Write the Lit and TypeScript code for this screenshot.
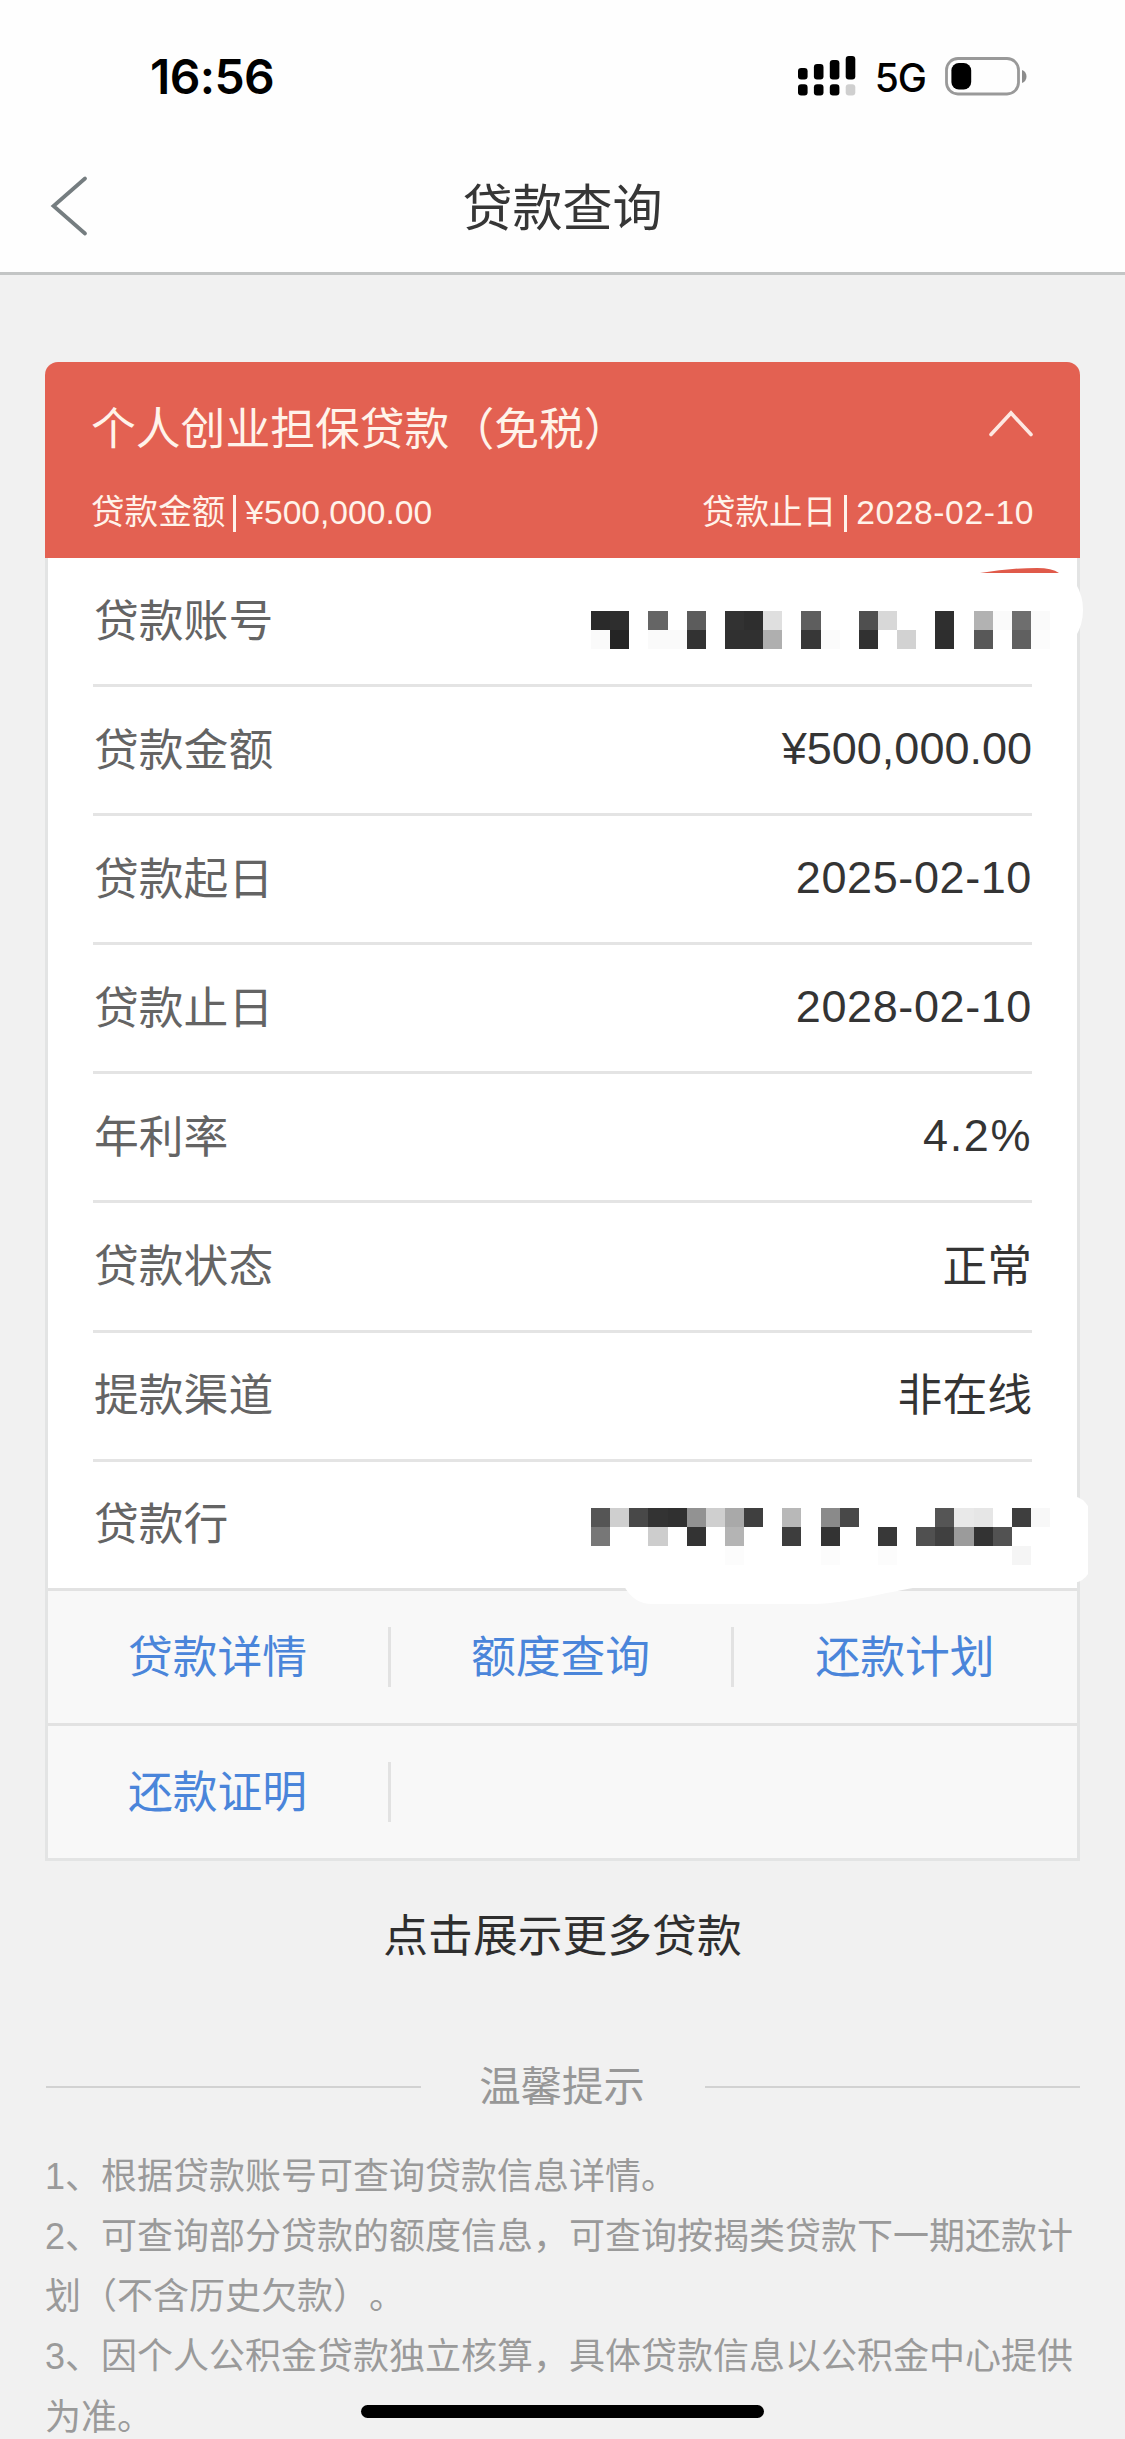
import { LitElement, html, css, svg } from "lit";
import { customElement, property } from "lit/decorators.js";

type Cell = [col: number, row: number, shade: string];

const ACCOUNT_MASK: Cell[] = [
  [0, 0, "#2a2a2a"], [1, 0, "#2e2e2e"], [3, 0, "#656565"], [5, 0, "#5c5c5c"], [7, 0, "#323232"],
  [8, 0, "#2e2e2e"], [9, 0, "#dfdfdf"], [11, 0, "#5e5e5e"], [14, 0, "#4f4f4f"], [15, 0, "#d8d8d8"],
  [18, 0, "#2f2f2f"], [20, 0, "#b2b2b2"], [21, 0, "#fafafa"], [22, 0, "#6e6e6e"], [23, 0, "#fafafa"],
  [0, 1, "#fafafa"], [1, 1, "#242424"], [3, 1, "#fafafa"], [4, 1, "#fafafa"], [5, 1, "#323232"],
  [7, 1, "#303030"], [8, 1, "#303030"], [9, 1, "#afafaf"], [11, 1, "#373737"], [12, 1, "#fbfbfb"],
  [14, 1, "#313131"], [16, 1, "#d2d2d2"], [18, 1, "#2e2e2e"], [20, 1, "#585858"], [22, 1, "#606060"],
  [23, 1, "#fcfcfc"],
];

const BANK_MASK: Cell[] = [
  [0, 0, "#555555"], [1, 0, "#cfcfcf"], [2, 0, "#484848"], [3, 0, "#333333"], [4, 0, "#303030"],
  [5, 0, "#929292"], [6, 0, "#cfcfcf"], [7, 0, "#a9a9a9"], [8, 0, "#3f3f3f"], [10, 0, "#b8b8b8"],
  [12, 0, "#8a8a8a"], [13, 0, "#484848"], [18, 0, "#555555"], [19, 0, "#e9e9e9"], [20, 0, "#e6e6e6"],
  [22, 0, "#3e3e3e"], [23, 0, "#f8f8f8"],
  [0, 1, "#777777"], [3, 1, "#cdcdcd"], [5, 1, "#333333"], [7, 1, "#b4b4b4"], [10, 1, "#3d3d3d"],
  [12, 1, "#333333"], [15, 1, "#383838"], [17, 1, "#505050"], [18, 1, "#404040"], [19, 1, "#9b9b9b"],
  [20, 1, "#333333"], [21, 1, "#525252"],
  [7, 2, "#fcfcfc"], [12, 2, "#fcfcfc"], [15, 2, "#fcfcfc"], [22, 2, "#f5f5f5"],
];

@customElement("pixel-mask")
class PixelMask extends LitElement {
  static styles = css`
    :host { display: block; }
    svg { display: block; }
  `;
  @property({ attribute: false }) cells: Cell[] = [];
  render() {
    return html`<svg width="459" height="57" viewBox="0 0 24 3" preserveAspectRatio="none" shape-rendering="crispEdges">
      ${this.cells.map(([c, r, f]) => svg`<rect x=${c} y=${r} width="1" height="1" fill=${f}></rect>`)}
    </svg>`;
  }
}

const ROWS: { label: string; value?: string; mask?: Cell[]; kind?: string }[] = [
  { label: "贷款账号", mask: ACCOUNT_MASK },
  { label: "贷款金额", value: "¥500,000.00", kind: "number" },
  { label: "贷款起日", value: "2025-02-10", kind: "number date" },
  { label: "贷款止日", value: "2028-02-10", kind: "number date" },
  { label: "年利率", value: "4.2%", kind: "number rate" },
  { label: "贷款状态", value: "正常" },
  { label: "提款渠道", value: "非在线" },
  { label: "贷款行", mask: BANK_MASK },
];

const NOTES = [
  "1、根据贷款账号可查询贷款信息详情。",
  "2、可查询部分贷款的额度信息，可查询按揭类贷款下一期还款计划（不含历史欠款）。",
  "3、因个人公积金贷款独立核算，具体贷款信息以公积金中心提供为准。",
];

@customElement("app-root")
class AppRoot extends LitElement {
  static styles = css`
    :host {
      display: block;
      font-family: "Liberation Sans", "Noto Sans CJK SC", sans-serif;
      font-size: 44.8px;
      text-spacing-trim: space-all;
    }
    * { box-sizing: border-box; }
    svg { display: block; flex: none; }
    .page {
      position: relative;
      width: 1125px;
      height: 2439px;
      overflow: hidden;
      background: #f1f1f1;
    }
    .top { height: 275px; background: #fefefe; border-bottom: 3px solid #c3c5c5; }
    .status {
      height: 140px;
      padding: 12px 97px 0 150px;
      display: flex;
      align-items: center;
      font-family: Inter, sans-serif;
      color: #000;
    }
    .time { flex: 1; padding-top: 2px; font-size: 48px; font-weight: 600; letter-spacing: -0.6px; line-height: 60px; }
    .net { font-size: 39px; font-weight: 500; letter-spacing: -1px; line-height: 60px; margin: 3px 19px 0 19px; }
    .nav {
      height: 132px;
      display: grid;
      grid-template-columns: 100px 1fr 100px;
      align-items: center;
    }
    .back { margin-left: 48px; }
    .title { padding-top: 6px; text-align: center; font-size: 50px; line-height: 70px; color: #363636; }
    .content { padding: 87px 45px 0; }
    .card { position: relative; }
    .head {
      height: 196px;
      padding: 31px 46px 0 46px;
      border-radius: 13px 13px 0 0;
      background: #e36152;
      color: #fff3ea;
    }
    .headline { display: flex; justify-content: space-between; height: 68px; line-height: 72px; }
    .headline svg { margin-top: 16px; }
    .summary { display: flex; justify-content: space-between; margin-top: 27px; font-size: 33.6px; line-height: 50px; }
    .pair { display: flex; align-items: center; }
    .bar { width: 3px; height: 37px; margin: 0 9px 0 8px; background: #fff3ea; }
    .body { border: 3px solid #e3e4e4; border-top: 0; background: #fff; }
    .rows { padding: 0 45px; }
    .row {
      height: 129.1px;
      display: flex;
      align-items: center;
      justify-content: space-between;
      border-bottom: 3px solid #e4e4e4;
      line-height: 66px;
    }
    .row:last-child { border-bottom-color: transparent; }
    .label { color: #646464; padding: 0 0 1px 1px; }
    .value { color: #343434; padding-bottom: 1px; }
    .number { padding-bottom: 2px; font-size: 45px; }
    .date { letter-spacing: 0.6px; }
    .rate { letter-spacing: 1.6px; }
    .masked { align-self: flex-start; margin: 53px -18px 0 0; }
    .masked.low { margin-top: 46px; }
    .actions { display: grid; grid-template-columns: repeat(3, 1fr); background: #f8f8f8; margin-top: -3px; }
    .action {
      height: 135px;
      display: flex;
      align-items: center;
      border-top: 3px solid #e2e2e2;
      color: #4a85da;
    }
    .name { flex: 1; padding-right: 1px; text-align: center; line-height: 66px; }
    .sep { width: 3px; height: 60px; background: #e2e2e2; }
    .smudge { position: absolute; left: 535px; top: 196px; }
    .more { margin-top: 42px; text-align: center; line-height: 66px; color: #2e2e2e; }
    .tips { display: flex; align-items: center; justify-content: space-between; height: 60px; margin-top: 88px; padding-left: 1px; }
    .line { width: 375px; height: 2px; background: #d2d2d2; }
    .tipname { font-size: 41.4px; color: #979797; line-height: 60px; padding: 1px 2px 0 0; }
    .notes { margin-top: 30px; font-size: 36px; line-height: 60.2px; color: #9a9a9a; }
    .note { margin: 0; }
    .home {
      position: absolute;
      left: 361px;
      top: 2405px;
      width: 403px;
      height: 13px;
      border-radius: 7px;
      background: #000;
    }
  `;

  private signal() {
    const tops = [12, 8, 4, 0];
    return html`<svg width="58" height="40" viewBox="0 0 58 40">
      ${tops.map((t, i) => svg`
        <rect x=${i * 15.9} y=${t} width="9.6" height=${23.5 - t} rx="3.2"></rect>
        <rect x=${i * 15.9} y="28.2" width="9.6" height="11.2" rx="3.2" fill=${i === 3 ? "#cfcfcf" : "#000"}></rect>`)}
    </svg>`;
  }

  private battery() {
    return html`<svg width="83" height="39" viewBox="0 0 83 39">
      <rect x="1.5" y="1.5" width="72" height="35.5" rx="11.5" fill="none" stroke="#999" stroke-width="2.8"></rect>
      <rect x="6.4" y="6" width="19.8" height="26.5" rx="7.5"></rect>
      <path d="M77 13c6 2 6 11 0 13z" fill="#8c8c8c"></path>
    </svg>`;
  }

  private action(name: string, sep: boolean) {
    return html`<div class="action"><span class="name">${name}</span>${sep ? html`<i class="sep"></i>` : null}</div>`;
  }

  render() {
    return html`<div class="page">
      <header class="top">
        <div class="status">
          <span class="time">16:56</span>
          ${this.signal()}<span class="net">5G</span>${this.battery()}
        </div>
        <div class="nav">
          <svg class="back" width="42" height="64" viewBox="0 0 42 64">
            <path d="M37 4.5L5.5 32L37 59.5" fill="none" stroke="#757d80" stroke-width="3.8" stroke-linecap="round"></path>
          </svg>
          <span class="title">贷款查询</span>
        </div>
      </header>
      <main class="content">
        <section class="card">
          <div class="head">
            <div class="headline">
              <span>个人创业担保贷款（免税）</span>
              <svg width="46" height="30" viewBox="0 0 46 30">
                <path d="M3 25.5L23 4L43 25.5" fill="none" stroke="#fde8e2" stroke-width="3.6" stroke-linecap="round"></path>
              </svg>
            </div>
            <div class="summary">
              <div class="pair"><span>贷款金额</span><i class="bar"></i><span>¥500,000.00</span></div>
              <div class="pair"><span>贷款止日</span><i class="bar"></i><span class="date">2028-02-10</span></div>
            </div>
          </div>
          <div class="body">
            <div class="rows">
              ${ROWS.map((r, i) => html`<div class="row">
                <span class="label">${r.label}</span>
                ${r.mask
                  ? html`<pixel-mask class="masked ${i ? "low" : ""}" .cells=${r.mask}></pixel-mask>`
                  : html`<span class="value ${r.kind ?? ""}">${r.value}</span>`}
              </div>`)}
            </div>
            <div class="actions">
              ${this.action("贷款详情", true)}${this.action("额度查询", true)}${this.action("还款计划", false)}
              ${this.action("还款证明", true)}${this.action("", false)}${this.action("", false)}
            </div>
          </div>
          <svg class="smudge" width="520" height="1060" viewBox="580 558 520 1060">
            <path d="M980 573Q1010 568 1037 568Q1052 568 1059 573Z" fill="#e05a4a"></path>
            <path d="M1076 584Q1083 596 1083 610Q1083 624 1076 636Z" fill="#fff"></path>
            <path d="M1074 1496Q1083 1498 1088 1506V1574Q1084 1581 1074 1583Z" fill="#fff"></path>
            <path d="M624 1586Q634 1604 652 1604H815C850 1603 880 1593 925 1586Z" fill="#fff"></path>
          </svg>
        </section>
        <div class="more">点击展示更多贷款</div>
        <div class="tips"><i class="line"></i><span class="tipname">温馨提示</span><i class="line"></i></div>
        <div class="notes">${NOTES.map((n) => html`<p class="note">${n}</p>`)}</div>
      </main>
      <i class="home"></i>
    </div>`;
  }
}
